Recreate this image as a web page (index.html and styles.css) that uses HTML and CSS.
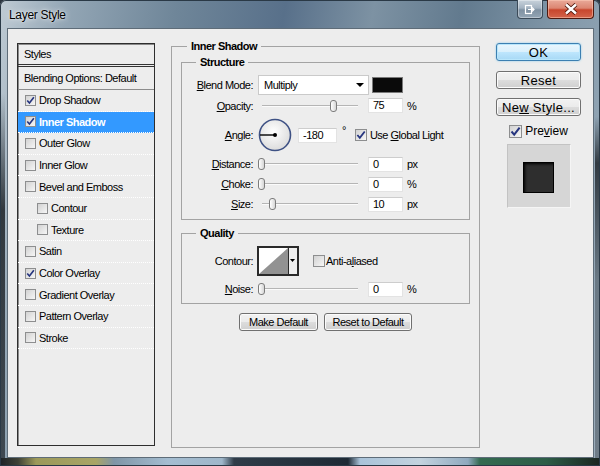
FILE: index.html
```html
<!DOCTYPE html>
<html lang="en">
<head>
    <title>Layer Style</title>
    <meta charset="UTF-8">
    <link rel="stylesheet" href="styles.css">
</head>
<body>
    <div id="janela">
        <div class="titlebar">
            <span class="title">Layer Style</span>
            <div class="caption-buttons">
                <div class="cap-btn tray">
                    <svg width="12" height="11" viewBox="0 0 12 11">
                        <rect x="1.5" y="1.5" width="6" height="8" fill="none" stroke="#fff" stroke-width="1.2"/>
                        <path d="M4 5.5 H10 M8 3.5 L10 5.5 L8 7.5" fill="none" stroke="#fff" stroke-width="1.2"/>
                    </svg>
                </div>
                <div class="cap-btn close">
                    <svg width="16" height="12" viewBox="0 0 16 12">
                        <path d="M3 1.5 L13 10.5 M13 1.5 L3 10.5" stroke="#4b1206" stroke-width="4.2"/>
                        <path d="M3 1.5 L13 10.5 M13 1.5 L3 10.5" stroke="#fff" stroke-width="2.4"/>
                    </svg>
                </div>
            </div>
        </div>

        <div class="client">
            <div class="styles-list">
                <div class="list-head">Styles</div>
                <div class="list-blend">Blending Options: Default</div>
                <div class="item"><span class="cb on"><svg width="9" height="9" viewBox="0 0 11 11"><path d="M1.5 5.5 L4.2 8.6 L9.6 1.6" fill="none" stroke="#26357f" stroke-width="2"/></svg></span>Drop Shadow</div>
                <div class="item selected"><span class="cb on"><svg width="9" height="9" viewBox="0 0 11 11"><path d="M1.5 5.5 L4.2 8.6 L9.6 1.6" fill="none" stroke="#26357f" stroke-width="2"/></svg></span>Inner Shadow</div>
                <div class="item"><span class="cb"></span>Outer Glow</div>
                <div class="item"><span class="cb"></span>Inner Glow</div>
                <div class="item"><span class="cb"></span>Bevel and Emboss</div>
                <div class="item sub"><span class="cb"></span>Contour</div>
                <div class="item sub"><span class="cb"></span>Texture</div>
                <div class="item"><span class="cb"></span>Satin</div>
                <div class="item"><span class="cb on"><svg width="9" height="9" viewBox="0 0 11 11"><path d="M1.5 5.5 L4.2 8.6 L9.6 1.6" fill="none" stroke="#26357f" stroke-width="2"/></svg></span>Color Overlay</div>
                <div class="item"><span class="cb"></span>Gradient Overlay</div>
                <div class="item"><span class="cb"></span>Pattern Overlay</div>
                <div class="item"><span class="cb"></span>Stroke</div>
            </div>

            <fieldset class="panel">
                <legend>Inner Shadow</legend>
                <div class="panel-body">
                    <fieldset class="group">
                        <legend>Structure</legend>
                        <div class="group-body structure">
                            <div class="row">
                                <span class="lbl"><u>B</u>lend Mode:</span>
                                <div class="select"><span>Multiply</span><span class="arrow"></span></div>
                                <div class="swatch"></div>
                            </div>
                            <div class="row r-opacity">
                                <span class="lbl"><u>O</u>pacity:</span>
                                <div class="slider"><div class="track"></div><div class="thumb" style="left: 72px"></div></div>
                                <div class="num">75</div>
                                <span class="unit">%</span>
                            </div>
                            <div class="row r-angle">
                                <span class="lbl"><u>A</u>ngle:</span>
                                <svg class="dial" width="34" height="34" viewBox="0 0 34 34">
                                    <defs>
                                        <radialGradient id="dialfill" cx="45%" cy="40%" r="60%">
                                            <stop offset="0" stop-color="#ffffff"/>
                                            <stop offset="1" stop-color="#dcdcdc"/>
                                        </radialGradient>
                                    </defs>
                                    <circle cx="17" cy="17" r="15.5" fill="url(#dialfill)" stroke="#3e5184" stroke-width="1.6"/>
                                    <line x1="2" y1="17" x2="17" y2="17" stroke="#000" stroke-width="1.4"/>
                                    <circle cx="17" cy="17" r="2" fill="#000"/>
                                </svg>
                                <div class="num wide">-180</div>
                                <span class="deg">°</span>
                                <span class="cb mid on"><svg width="10" height="10" viewBox="0 0 11 11"><path d="M1.5 5.5 L4.2 8.6 L9.6 1.6" fill="none" stroke="#26357f" stroke-width="2"/></svg></span>
                                <span class="cb-text">Use <u>G</u>lobal Light</span>
                            </div>
                            <div class="row">
                                <span class="lbl"><u>D</u>istance:</span>
                                <div class="slider"><div class="track"></div><div class="thumb" style="left: 0px"></div></div>
                                <div class="num">0</div>
                                <span class="unit">px</span>
                            </div>
                            <div class="row">
                                <span class="lbl"><u>C</u>hoke:</span>
                                <div class="slider"><div class="track"></div><div class="thumb" style="left: 0px"></div></div>
                                <div class="num">0</div>
                                <span class="unit">%</span>
                            </div>
                            <div class="row">
                                <span class="lbl"><u>S</u>ize:</span>
                                <div class="slider"><div class="track"></div><div class="thumb" style="left: 11px"></div></div>
                                <div class="num">10</div>
                                <span class="unit">px</span>
                            </div>
                        </div>
                    </fieldset>

                    <fieldset class="group quality">
                        <legend>Quality</legend>
                        <div class="group-body">
                            <div class="row r-contour">
                                <span class="lbl">Contour:</span>
                                <svg class="contour" width="42" height="30" viewBox="0 0 42 30">
                                    <rect x="1" y="1" width="40" height="28" fill="#fff" stroke="#2a2a2a" stroke-width="2"/>
                                    <polygon points="2,28 31,2 31,28" fill="#929292"/>
                                    <rect x="31" y="2" width="9" height="26" fill="#efefef"/>
                                    <line x1="31.5" y1="2" x2="31.5" y2="28" stroke="#2a2a2a"/>
                                    <polygon points="33,13 38,13 35.5,16" fill="#000"/>
                                </svg>
                                <span class="cb mid aa"></span>
                                <span class="cb-text">Anti-a<u>l</u>iased</span>
                            </div>
                            <div class="row r-noise">
                                <span class="lbl"><u>N</u>oise:</span>
                                <div class="slider"><div class="track"></div><div class="thumb" style="left: 0px"></div></div>
                                <div class="num">0</div>
                                <span class="unit">%</span>
                            </div>
                        </div>
                    </fieldset>

                    <div class="defaults">
                        <button class="btn">Make Default</button>
                        <button class="btn">Reset to Default</button>
                    </div>
                </div>
            </fieldset>

            <div class="side">
                <button class="btn side-btn ok">OK</button>
                <button class="btn side-btn">Reset</button>
                <button class="btn side-btn">Ne<u>w</u> Style...</button>
                <div class="preview-row">
                    <span class="cb big on"><svg width="11" height="11" viewBox="0 0 11 11"><path d="M1.5 5.5 L4.2 8.6 L9.6 1.6" fill="none" stroke="#26357f" stroke-width="2"/></svg></span>
                    <span>Pre<u>v</u>iew</span>
                </div>
                <div class="preview-box">
                    <div class="preview-square"></div>
                </div>
            </div>
        </div>
    </div>
</body>
</html>
```

FILE: styles.css
```css
* {
    box-sizing: border-box;
}

body {
    margin: 0;
    background: #2b3540;
    font-family: 'Liberation Sans', Arial, sans-serif;
    font-size: 11px;
    letter-spacing: -0.5px;
    color: #000;
}

#janela {
    width: 600px;
    height: 466px;
    display: flex;
    flex-direction: column;
    border-radius: 6px 6px 0 0;
    background:
        linear-gradient(to right, #1c2227 0%, #3e4136 3%, #9c995a 6%, #a9a566 16%, #7f95a6 19%, #a4bdd1 28%, #9fb7ca 37%, #2f3c48 39%, #1e2a35 58%, #a9c3d9 60%, #c3d3df 70%, #8fa9be 78%, #346a50 80%, #2d5d47 91%, #1b2520 100%) left bottom / 100% 8px no-repeat,
        linear-gradient(to bottom, rgba(0, 0, 0, 0) 20%, rgba(10, 14, 18, 0.75) 45%, rgba(10, 14, 18, 0.6) 100%) left top / 5px 100% no-repeat,
        linear-gradient(to bottom, rgba(0, 0, 0, 0) 25%, rgba(10, 14, 18, 0.7) 35%, rgba(10, 14, 18, 0.3) 60%) right top / 5px 100% no-repeat,
        linear-gradient(100deg, #bfcbd4 0%, #93a6b5 10%, #6f8699 26%, #58708a 42%, #7d92a3 55%, #627a8e 68%, #849aab 84%, #9cadbb 100%);
    box-shadow: inset 0 0 0 1px #2a3946;
}

.titlebar {
    height: 28px;
    display: flex;
    padding: 0 6px 0 9px;
}

.title {
    padding-top: 8px;
    font-size: 12px;
    line-height: 14px;
    letter-spacing: -0.3px;
    text-shadow: 0 0 6px rgba(255, 255, 255, 0.9), 0 0 2px rgba(255, 255, 255, 0.8);
}

.caption-buttons {
    margin-left: auto;
    display: flex;
    gap: 4px;
}

.cap-btn {
    height: 19px;
    display: flex;
    align-items: center;
    justify-content: center;
    border: 1px solid #3b4a58;
    border-top: none;
    border-radius: 0 0 4px 4px;
}

.tray {
    width: 26px;
    background: linear-gradient(#c9d3dc 0%, #a4b3c1 45%, #7f91a2 55%, #93a5b5 100%);
    box-shadow: inset 0 0 0 1px rgba(255, 255, 255, 0.35);
}

.close {
    width: 47px;
    border-color: #4e1a10;
    background: linear-gradient(#e9a999 0%, #dc8672 45%, #c8462d 55%, #d3644b 100%);
    box-shadow: inset 0 0 0 1px rgba(255, 210, 190, 0.5);
}

.client {
    flex: 1;
    margin: 0 6px 8px 7px;
    background: #ededed;
    border: 1px solid #5e6c78;
    display: flex;
    align-items: flex-start;
    padding: 11px 0 0 9px;
}

/* lista de estilos */

.styles-list {
    width: 138px;
    height: 403px;
    margin-top: 3px;
    border: 1px solid #2e2e2e;
    box-shadow: inset 1px 1px 0 #8a8a8a;
    background: #ededed;
}

.list-head {
    height: 23px;
    line-height: 20px;
    padding-left: 6px;
    border-bottom: 3px double #333;
}

.list-blend {
    height: 23px;
    line-height: 22px;
    padding-left: 6px;
    border-bottom: 1px solid #8c8c8c;
}

.item {
    height: 21.6px;
    display: flex;
    align-items: center;
    gap: 3px;
    padding-left: 7px;
    border-bottom: 1px dotted #fff;
}

.item.sub {
    padding-left: 19px;
}

.item.selected {
    background: #3399ff;
    color: #fff;
    font-weight: bold;
}

.cb {
    width: 11px;
    height: 11px;
    flex-shrink: 0;
    display: inline-flex;
    align-items: center;
    justify-content: center;
    border: 1px solid #8d8e8f;
    background: linear-gradient(135deg, #d2d2d2, #f6f6f6);
}

.cb.mid {
    width: 12px;
    height: 12px;
}

.cb.big {
    width: 13px;
    height: 13px;
}

/* painel do meio */

fieldset {
    margin: 0;
    padding: 0;
    min-width: 0;
    border: 1px solid #a3a3a3;
}

legend {
    font-weight: bold;
    line-height: 12px;
    padding: 0 4px;
}

.panel {
    width: 309px;
    height: 408px;
    margin-left: 16px;
    flex-shrink: 0;
}

.panel > legend {
    margin-left: 15px;
}

.panel-body {
    padding: 4px 9px 0;
}

.group > legend {
    margin-left: 14px;
}

.group-body {
    padding: 7px 0 5px;
}

.quality {
    margin-top: 7px;
}

.quality .group-body {
    padding-bottom: 4px;
}

.row {
    display: flex;
    align-items: center;
    height: 20px;
}

.r-opacity {
    height: 21px;
}

.r-angle {
    height: 38px;
}

.r-contour {
    height: 30px;
}

.r-noise {
    margin-top: 3px;
}

.lbl {
    width: 71px;
    flex-shrink: 0;
    text-align: right;
}

.select {
    margin-left: 5px;
    width: 111px;
    height: 20px;
    display: flex;
    align-items: center;
    padding-left: 5px;
    background: #fff;
    border: 1px solid #cacaca;
}

.arrow {
    margin-left: auto;
    margin-right: 4px;
    border-left: 4px solid transparent;
    border-right: 4px solid transparent;
    border-top: 4px solid #000;
}

.swatch {
    margin-left: 3px;
    width: 31px;
    height: 16px;
    background: #0a0a0a;
    border: 1px solid #7a7a7a;
}

.slider {
    position: relative;
    margin-left: 5px;
    width: 103px;
    height: 14px;
    display: flex;
    align-items: center;
}

.track {
    flex: 1;
    margin: 0 3px 0 4px;
    border-top: 1px solid #b5b5b5;
    border-bottom: 1px solid #fbfbfb;
}

.thumb {
    position: absolute;
    top: 1px;
    width: 7px;
    height: 12px;
    border: 1px solid #7c7c7c;
    border-radius: 3px;
    background: linear-gradient(to right, #ffffff, #d6d6d6);
}

.num {
    margin-left: 7px;
    width: 35px;
    height: 15px;
    line-height: 13px;
    padding-left: 4px;
    background: #fff;
    border: 1px solid #e3e3e3;
    border-top-color: #cdcdcd;
}

.num.wide {
    margin-left: 6px;
    width: 39px;
}

.unit {
    margin-left: 4px;
}

.dial {
    margin-left: 5px;
    flex-shrink: 0;
}

.deg {
    margin-left: 5px;
    align-self: flex-start;
    margin-top: 8px;
}

.r-angle .cb {
    margin-left: 9px;
}

.cb-text {
    margin-left: 3px;
}

.contour {
    margin-left: 4px;
    flex-shrink: 0;
}

.cb.aa {
    margin-left: 14px;
}

.r-contour .cb-text {
    margin-left: 1px;
}

.defaults {
    margin-top: 9px;
    display: flex;
    justify-content: center;
    gap: 6px;
}

.btn {
    height: 18px;
    padding: 0;
    white-space: nowrap;
    font-family: 'Liberation Sans', Arial, sans-serif;
    font-size: 11px;
    letter-spacing: -0.5px;
    color: #000;
    border: 1px solid #707070;
    border-radius: 3px;
    background: linear-gradient(#f2f2f2 0%, #ebebeb 50%, #dddddd 50%, #cfcfcf 100%);
    box-shadow: inset 0 0 0 1px #fbfbfb;
}

.defaults .btn:first-child {
    width: 79px;
}

.defaults .btn:last-child {
    width: 88px;
}

/* coluna da direita */

.side {
    width: 85px;
    margin: 3px 0 0 16px;
    display: flex;
    flex-direction: column;
}

.side-btn {
    width: 85px;
    font-size: 13px;
    letter-spacing: 0.3px;
    margin-bottom: 9px;
}

.side-btn.ok {
    margin-bottom: 10px;
    border-color: #3c7fb1;
    background: linear-gradient(#eaf6fd 0%, #d9f0fc 50%, #bee6fd 50%, #a7d9f5 100%);
    box-shadow: inset 0 0 0 1px #b9e6fb, 0 0 2px #7ec8ef;
}

.preview-row {
    margin-top: -3px;
    height: 18px;
    display: flex;
    align-items: center;
    justify-content: center;
    gap: 3px;
    font-size: 12px;
    letter-spacing: 0;
}

.preview-box {
    margin: 4px auto 0;
    width: 64px;
    height: 64px;
    display: flex;
    align-items: center;
    justify-content: center;
    background: #d6d6d6;
    border: 1px solid;
    border-color: #c3c3c3 #f5f5f5 #f5f5f5 #c3c3c3;
}

.preview-square {
    width: 31px;
    height: 31px;
    margin-top: 3px;
    background: #2e2e2e;
    box-shadow: inset 0 0 0 1px #000, inset 2px 2px 3px #000;
}
```
